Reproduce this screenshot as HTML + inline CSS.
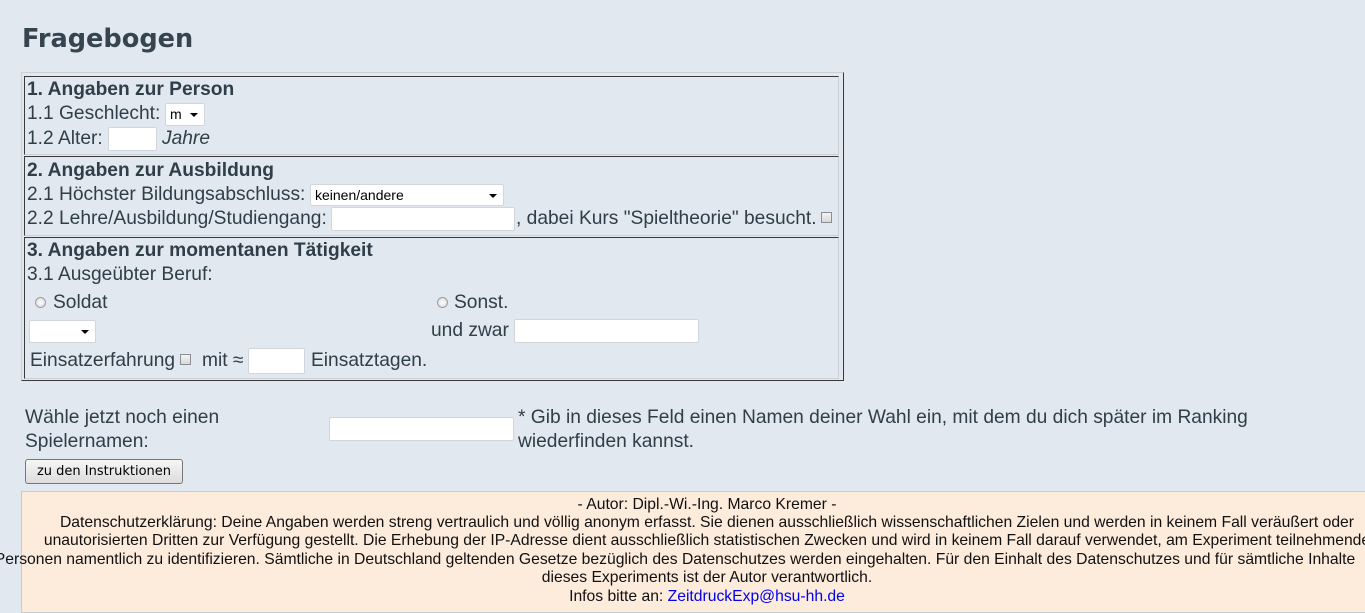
<!DOCTYPE html>
<html><head><meta charset="utf-8"><style>
html,body{margin:0;padding:0;width:1365px;height:603px;overflow:hidden;background:#e1e8f0;font-family:"Liberation Sans",Arial,sans-serif;color:#2f3e48;}
.a{position:absolute;white-space:nowrap;font-size:19.2px;line-height:24px;}
h1{position:absolute;left:22px;top:24px;margin:0;font-family:"DejaVu Sans",sans-serif;font-weight:bold;font-size:25.6px;color:#35444f;}
.outer{position:absolute;left:21px;top:72px;width:821px;height:307px;border:1px solid;border-color:#c9d0d8 #3a3a3a #3a3a3a #c9d0d8;}
.sec{position:absolute;left:24px;width:813px;border:1px solid;border-color:#3a3a3a #c9d0d8 #c9d0d8 #3a3a3a;}
.inp{position:absolute;background:#fff;border:1px solid #d0d6dc;border-radius:2px;box-sizing:border-box;}
.sel{position:absolute;background:#fff;border:1px solid #d0d6dc;border-radius:2px;box-sizing:border-box;font-size:14px;color:#000;padding-left:4px;line-height:20px;}
.sel:after{content:"";position:absolute;right:6px;top:9px;border:4px solid transparent;border-top:4px solid #000;border-bottom:0;}
.cb{position:absolute;width:11px;height:11px;border:1px solid #8a8f94;background:linear-gradient(#f4f4f4,#d8d8d8);box-sizing:border-box;}
.rb{position:absolute;width:11px;height:11px;border:1px solid #9a9fa4;border-radius:50%;background:radial-gradient(#fff,#d4d4d4);box-sizing:border-box;}
b{font-weight:bold;}
.foot{position:absolute;left:21px;top:491px;width:1400px;height:120px;background:#fdebdc;border:1px solid #c6ccd2;}
.fl{position:absolute;left:-308px;width:2030px;text-align:center;white-space:nowrap;font-size:15.7px;line-height:18px;color:#111;}
</style></head><body>
<h1>Fragebogen</h1>
<div class="outer"></div>
<div class="sec" style="top:76px;height:77px"></div>
<div class="sec" style="top:156px;height:78px"></div>
<div class="sec" style="top:237px;height:140px"></div>

<div class="a" style="left:27px;top:78px"><b>1. Angaben zur Person</b></div>
<div class="a" style="left:27px;top:102px">1.1 Geschlecht:</div>
<div class="sel" style="left:165px;top:103px;width:40px;height:23px">m</div>
<div class="a" style="left:27px;top:127px">1.2 Alter:</div>
<div class="inp" style="left:108px;top:127px;width:49px;height:24px"></div>
<div class="a" style="left:162px;top:127px;font-style:italic">Jahre</div>

<div class="a" style="left:27px;top:159px"><b>2. Angaben zur Ausbildung</b></div>
<div class="a" style="left:27px;top:183px">2.1 Höchster Bildungsabschluss:</div>
<div class="sel" style="left:310px;top:184px;width:194px;height:22px">keinen/andere</div>
<div class="a" style="left:27px;top:207px">2.2 Lehre/Ausbildung/Studiengang:</div>
<div class="inp" style="left:331px;top:207px;width:184px;height:24px"></div>
<div class="a" style="left:516px;top:207px">, dabei Kurs "Spieltheorie" besucht.</div>
<div class="cb" style="left:821px;top:212px"></div>

<div class="a" style="left:27px;top:239px"><b>3. Angaben zur momentanen Tätigkeit</b></div>
<div class="a" style="left:27px;top:263px">3.1 Ausgeübter Beruf:</div>
<div class="rb" style="left:35px;top:297px"></div>
<div class="a" style="left:53px;top:291px">Soldat</div>
<div class="rb" style="left:437px;top:297px"></div>
<div class="a" style="left:454px;top:291px">Sonst.</div>
<div class="sel" style="left:29px;top:320px;width:67px;height:23px"></div>
<div class="a" style="left:431px;top:319px">und zwar</div>
<div class="inp" style="left:514px;top:319px;width:185px;height:24px"></div>
<div class="a" style="left:30px;top:349px">Einsatzerfahrung</div>
<div class="cb" style="left:180px;top:354px"></div>
<div class="a" style="left:202px;top:349px">mit ≈</div>
<div class="inp" style="left:248px;top:348px;width:57px;height:26px"></div>
<div class="a" style="left:311px;top:349px">Einsatztagen.</div>

<div class="a" style="left:25px;top:406px;line-height:24px">Wähle jetzt noch einen<br>Spielernamen:</div>
<div class="inp" style="left:329px;top:417px;width:185px;height:24px"></div>
<div class="a" style="left:518px;top:406px;line-height:24px">* Gib in dieses Feld einen Namen deiner Wahl ein, mit dem du dich später im Ranking<br>wiederfinden kannst.</div>
<div style="position:absolute;left:25px;top:459px;width:158px;height:25px;box-sizing:border-box;border:1px solid #777;border-radius:3px;background:linear-gradient(#f6f6f6,#dcdcdc);font-family:'DejaVu Sans',sans-serif;font-size:13px;line-height:23px;text-align:center;color:#000">zu den Instruktionen</div>

<div class="foot"></div>
<div class="fl" style="top:496px">- Autor: Dipl.-Wi.-Ing. Marco Kremer -</div>
<div class="fl" style="top:514px">Datenschutzerklärung: Deine Angaben werden streng vertraulich und völlig anonym erfasst. Sie dienen ausschließlich wissenschaftlichen Zielen und werden in keinem Fall veräußert oder</div>
<div class="fl" style="top:532px">unautorisierten Dritten zur Verfügung gestellt. Die Erhebung der IP-Adresse dient ausschließlich statistischen Zwecken und wird in keinem Fall darauf verwendet, am Experiment teilnehmende</div>
<div class="fl" style="top:551px;left:-340px">Personen namentlich zu identifizieren. Sämtliche in Deutschland geltenden Gesetze bezüglich des Datenschutzes werden eingehalten. Für den Einhalt des Datenschutzes und für sämtliche Inhalte</div>
<div class="fl" style="top:569px">dieses Experiments ist der Autor verantwortlich.</div>
<div class="fl" style="top:588px">Infos bitte an: <span style="color:#0000ee">ZeitdruckExp@hsu-hh.de</span></div>
</body></html>
